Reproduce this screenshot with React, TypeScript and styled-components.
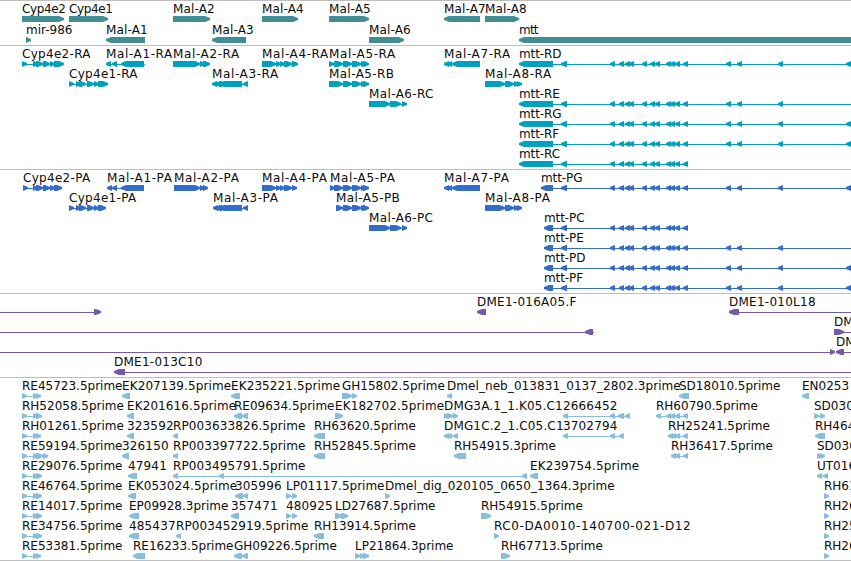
import React, { FC } from "react";
import styled, { createGlobalStyle, ThemeProvider } from "styled-components";

type Strand = "+" | "-";
type Exon = [number, number];

interface FeatureData {
  name: string;
  strand: Strand;
  exons: Exon[];
  start: number;
  end: number;
}

interface TrackData {
  id: string;
  color: string;
  rowHeight: number;
  gap: number;
  rows: FeatureData[][];
}

const VIEW_END = 851;

const theme = {
  colors: {
    white: "#ffffff",
    black: "#0c0c0c",
    border: "#bebebe",
    gene: "#408e93",
    transcript: "#00a0c0",
    protein: "#336dcc",
    bac: "#7757a7",
    est: "#88bddd",
  },
  font: '"DejaVu Sans", sans-serif',
};

const feature = (
  name: string,
  strand: Strand,
  exons: Exon[],
  start = exons[0][0],
  end = exons[exons.length - 1][1]
): FeatureData => ({ name, strand, exons, start, end });

const mttShared: Exon[] = [
  [561, 567],
  [610, 615],
  [619, 624],
  [625, 630],
  [629, 634],
  [642, 647],
  [650, 655],
  [655, 660],
  [666, 671],
  [670, 675],
  [675, 680],
  [683, 688],
];
const mttMiddle: Exon[] = [...mttShared, [726, 731], [737, 742], [778, 783]];
const mttLong: Exon[] = [...mttMiddle, [846, 852]];

const a5Tail: Exon[] = [[343, 352], [352, 361], [361, 366], [363, 369]];
const a7: Exon[] = [[444, 449], [447, 452], [452, 480]];
const a8: Exon[] = [[485, 505], [505, 514], [514, 519], [517, 522]];
const a6: Exon[] = [[369, 390], [390, 401], [402, 407]];

const estHead = (name: string, end: number): FeatureData =>
  feature(name, "+", [[22, 27], [33, 38], [36, end]]);

const tracks: TrackData[] = [
  {
    id: "genes",
    color: theme.colors.gene,
    rowHeight: 21,
    gap: 1,
    rows: [
      [
        feature("Cyp4e2", "+", [[22, 64]]),
        feature("Cyp4e1", "+", [[69, 108]]),
        feature("Mal-A2", "+", [[173, 210]]),
        feature("Mal-A4", "+", [[262, 298]]),
        feature("Mal-A5", "+", [[329, 369]]),
        feature("Mal-A7", "-", [[444, 480]]),
        feature("Mal-A8", "+", [[485, 519]]),
      ],
      [
        feature("mir-986", "+", [[26, 31]]),
        feature("Mal-A1", "-", [[106, 145]]),
        feature("Mal-A3", "-", [[212, 246]]),
        feature("Mal-A6", "+", [[369, 404]]),
        feature("mtt", "-", [[519, 860]]),
      ],
    ],
  },
  {
    id: "transcripts",
    color: theme.colors.transcript,
    rowHeight: 20,
    gap: 2,
    rows: [
      [
        feature("Cyp4e2-RA", "+", [[22, 27], [33, 38], [36, 43], [43, 50], [50, 55], [54, 64]]),
        feature("Mal-A1-RA", "-", [[106, 111], [112, 117], [121, 144]], 106, 145),
        feature("Mal-A2-RA", "+", [[173, 200], [200, 205], [203, 210]]),
        feature("Mal-A4-RA", "+", [[262, 276], [276, 281], [280, 285], [284, 292], [292, 298]]),
        feature("Mal-A5-RA", "+", [[329, 334], [334, 343], ...a5Tail]),
        feature("Mal-A7-RA", "-", a7),
        feature("mtt-RD", "-", [[519, 553], ...mttLong]),
      ],
      [
        feature("Cyp4e1-RA", "+", [[69, 74], [76, 81], [79, 86], [87, 94], [94, 99], [98, 108]]),
        feature("Mal-A3-RA", "-", [[212, 217], [215, 222], [219, 242], [243, 248]]),
        feature("Mal-A5-RB", "+", [[329, 343], ...a5Tail]),
        feature("Mal-A8-RA", "+", a8),
      ],
      [
        feature("Mal-A6-RC", "+", a6),
        feature("mtt-RE", "-", [[519, 553], ...mttMiddle], 519, VIEW_END),
      ],
      [feature("mtt-RG", "-", [[519, 553], ...mttLong])],
      [feature("mtt-RF", "-", [[519, 553], ...mttLong])],
      [feature("mtt-RC", "-", [[519, 553], ...mttShared])],
    ],
  },
  {
    id: "proteins",
    color: theme.colors.protein,
    rowHeight: 20,
    gap: 2,
    rows: [
      [
        feature("Cyp4e2-PA", "+", [[23, 28], [33, 38], [36, 43], [43, 50], [50, 55], [54, 62]]),
        feature("Mal-A1-PA", "-", [[107, 112], [112, 117], [121, 144]]),
        feature("Mal-A2-PA", "+", [[174, 200], [200, 205], [203, 208]]),
        feature("Mal-A4-PA", "+", [[262, 276], [276, 281], [280, 285], [284, 292], [292, 297]]),
        feature("Mal-A5-PA", "+", [[330, 335], [334, 343], ...a5Tail]),
        feature("Mal-A7-PA", "-", a7),
        feature("mtt-PG", "-", [[541, 553], ...mttLong]),
      ],
      [
        feature("Cyp4e1-PA", "+", [[69, 74], [76, 81], [79, 86], [87, 94], [94, 99], [98, 106]]),
        feature("Mal-A3-PA", "-", [[213, 218], [215, 222], [219, 242], [243, 248]]),
        feature("Mal-A5-PB", "+", [[336, 343], ...a5Tail]),
        feature("Mal-A8-PA", "+", a8),
      ],
      [
        feature("Mal-A6-PC", "+", a6),
        feature("mtt-PC", "-", [[544, 553], ...mttShared]),
      ],
      [feature("mtt-PE", "-", [[544, 553], ...mttMiddle], 544, VIEW_END)],
      [feature("mtt-PD", "-", [[544, 553], ...mttLong])],
      [feature("mtt-PF", "-", [[544, 553], ...mttLong])],
    ],
  },
  {
    id: "bacs",
    color: theme.colors.bac,
    rowHeight: 20,
    gap: 2,
    rows: [
      [
        feature("", "+", [[94, 101]], 0),
        feature("DME1-016A05.F", "-", [[477, 486]]),
        feature("DME1-010L18", "-", [[729, 739]], 729, VIEW_END),
      ],
      [
        feature("", "-", [[585, 593]], 0, 594),
        feature("DM", "+", [[834, 844]], 834, VIEW_END),
      ],
      [
        feature("", "+", [[830, 835]], 0),
        feature("DM", "-", [[836, 844]], 836, VIEW_END),
      ],
      [feature("DME1-013C10", "-", [[114, 125]], 114, VIEW_END)],
    ],
  },
  {
    id: "ests",
    color: theme.colors.est,
    rowHeight: 20,
    gap: 1,
    rows: [
      [
        estHead("RE45723.5prime", 41),
        feature("EK207139.5prime", "-", [[122, 130]]),
        feature("EK235221.5prime", "-", [[231, 240]]),
        feature("GH15802.5prime", "+", [[342, 352], [352, 357]]),
        feature("Dmel_neb_013831_0137_2802.3prime", "-", [[447, 452]]),
        feature("SD18010.5prime", "-", [[679, 689]]),
        feature("EN0253", "-", [[802, 809]]),
      ],
      [
        estHead("RH52058.5prime", 42),
        feature("EK201616.5prime", "-", [[127, 134]]),
        feature("RE09634.5prime", "-", [[234, 242], [242, 248]]),
        feature("EK182702.5prime", "+", [[335, 343]]),
        feature("DMG3A.1_1.K05.C1", "+", [[444, 449], [447, 453], [453, 458]]),
        feature("2666452", "-", [[563, 568], [610, 615], [618, 624], [625, 630]]),
        feature("RH60790.5prime", "-", [[656, 661], [666, 671], [670, 675], [675, 680], [683, 688]]),
        feature("SD030", "+", [[814, 819], [820, 825]]),
      ],
      [
        estHead("RH01261.5prime", 41),
        feature("323592", "-", [[127, 134]]),
        feature("RP003633826.5prime", "-", [[173, 178]]),
        feature("RH63620.5prime", "-", [[314, 325]]),
        feature("DMG1C.2_1.C05.C1", "-", [[444, 449], [447, 452], [453, 458]]),
        feature("3702794", "-", [[563, 568], [610, 615], [619, 624]]),
        feature("RH25241.5prime", "-", [[668, 673], [671, 676], [675, 680], [683, 688]]),
        feature("RH464", "-", [[815, 825]]),
      ],
      [
        feature("RE59194.5prime", "+", [[22, 27], [33, 38], [36, 43], [43, 48]]),
        feature("326150", "-", [[122, 129]]),
        feature("RP003397722.5prime", "-", [[173, 178]]),
        feature("RH52845.5prime", "-", [[314, 325]]),
        feature("RH54915.3prime", "-", [[454, 466]]),
        feature("RH36417.5prime", "-", [[671, 676], [675, 680], [683, 688]]),
        feature("SD030", "+", [[817, 822], [820, 825]]),
      ],
      [
        estHead("RE29076.5prime", 42),
        feature("47941", "-", [[128, 137]]),
        feature("RP003495791.5prime", "-", [[173, 178], [219, 224], [522, 527]]),
        feature("EK239754.5prime", "-", [[530, 538]]),
        feature("UT016", "-", [[817, 822], [823, 828]]),
      ],
      [
        estHead("RE46764.5prime", 42),
        feature("EK053024.5prime", "-", [[128, 136]]),
        feature("305996", "-", [[235, 243], [243, 248]]),
        feature("LP01117.5prime", "+", [[286, 291], [292, 297]]),
        feature("Dmel_dig_020105_0650_1364.3prime", "+", [[385, 390]]),
        feature("RH61", "+", [[824, 829]]),
      ],
      [
        estHead("RE14017.5prime", 42),
        feature("EP09928.3prime", "-", [[129, 139]]),
        feature("357471", "-", [[231, 239]]),
        feature("480925", "+", [[286, 291], [292, 297]]),
        feature("LD27687.5prime", "+", [[335, 342], [341, 348]]),
        feature("RH54915.5prime", "+", [[481, 491]]),
        feature("RH26", "+", [[824, 829]]),
      ],
      [
        estHead("RE34756.5prime", 42),
        feature("485437", "-", [[129, 139]]),
        feature("RP003452919.5prime", "-", [[176, 181]]),
        feature("RH13914.5prime", "-", [[314, 324]]),
        feature("RC0-DA0010-140700-021-D12", "+", [[494, 499]]),
        feature("RH25", "+", [[824, 829]]),
      ],
      [
        estHead("RE53381.5prime", 41),
        feature("RE16233.5prime", "-", [[133, 145]]),
        feature("GH09226.5prime", "-", [[234, 242], [242, 248]]),
        feature("LP21864.3prime", "+", [[355, 360], [360, 365], [363, 369]]),
        feature("RH67713.5prime", "+", [[501, 510]]),
        feature("RH26", "+", [[824, 829]]),
      ],
    ],
  },
];

/* Letter spacing in px, first match wins. */
const spacingRules: [RegExp, number][] = [
  [/^Cyp4e\d$/, -0.35],
  [/^Cyp4e/, 0.3],
  [/^Mal-A\d-[RP]A$/, 0.62],
  [/^Mal-A\d-/, 0.38],
  [/^Mal-A\d$/, 0.15],
  [/^mtt$/, -0.8],
  [/^mtt-/, -0.1],
  [/^DME1-/, 0.26],
  [/^RC0-/, 0.61],
  [/^(EK|RP)/, 0.1],
  [/^DMG/, 0.15],
  [/^Dmel/, 0.07],
  [/^\d+$/, 0.15],
];

const getSpacing = (name: string): number => {
  const rule = spacingRules.find(([pattern]) => pattern.test(name));
  return rule ? rule[1] : 0;
};

const GlobalStyle = createGlobalStyle`
  body {
    margin: 0;
    background-color: ${theme.colors.white};
  }
`;

const Browser = styled.main`
  width: ${VIEW_END}px;
  overflow: hidden;
  border-bottom: 1px solid ${({ theme }) => theme.colors.border};
  background-color: ${({ theme }) => theme.colors.white};
`;

const TrackContainer = styled.section<{ $gap: number; $color: string }>`
  display: flex;
  flex-direction: column;
  padding: 1px 0 ${({ $gap }) => $gap}px;
  border-top: 1px solid ${({ theme }) => theme.colors.border};
  color: ${({ $color }) => $color};
`;

const Row = styled.div<{ $height: number }>`
  position: relative;
  height: ${({ $height }) => $height}px;
`;

/* Features sit at their sequence coordinate and may overlap. */
const FeatureContainer = styled.div`
  position: absolute;
  top: 0;
  display: flex;
  flex-direction: column;
`;

const Name = styled.span<{ $spacing: number }>`
  height: 14px;
  font-family: ${({ theme }) => theme.font};
  font-size: 12px;
  line-height: 14px;
  letter-spacing: ${({ $spacing }) => $spacing}px;
  white-space: nowrap;
  color: ${({ theme }) => theme.colors.black};
`;

const Glyph = styled.svg`
  display: block;
  height: 6px;
  fill: currentColor;
`;

const exonPoints = ([from, to]: Exon, strand: Strand): string => {
  const head = Math.min(5, to - from);
  const [tail, neck, tip] =
    strand === "+" ? [from, to - head, to] : [to, from + head, from];

  return `${tail},0 ${neck},0 ${tip},2 ${tip},4 ${neck},6 ${tail},6`;
};

interface FeatureProps {
  data: FeatureData;
}

const Feature: FC<FeatureProps> = ({ data }) => {
  const { name, strand, exons, start, end } = data;
  const width = end - start;

  return (
    <FeatureContainer style={{ left: start }}>
      <Name $spacing={getSpacing(name)}>{name}</Name>
      <Glyph width={width} viewBox={`${start} 0 ${width} 6`}>
        <rect x={start} y={3} width={width} height={1} />
        {exons.map((exon) => (
          <polygon key={exon[0]} points={exonPoints(exon, strand)} />
        ))}
      </Glyph>
    </FeatureContainer>
  );
};

const App: FC = () => (
  <ThemeProvider theme={theme}>
    <GlobalStyle />
    <Browser>
      {tracks.map(({ id, color, rowHeight, gap, rows }) => (
        <TrackContainer key={id} $gap={gap} $color={color}>
          {rows.map((row, index) => (
            <Row key={index} $height={rowHeight}>
              {row.map((data) => (
                <Feature key={data.start} data={data} />
              ))}
            </Row>
          ))}
        </TrackContainer>
      ))}
    </Browser>
  </ThemeProvider>
);

export default App;
